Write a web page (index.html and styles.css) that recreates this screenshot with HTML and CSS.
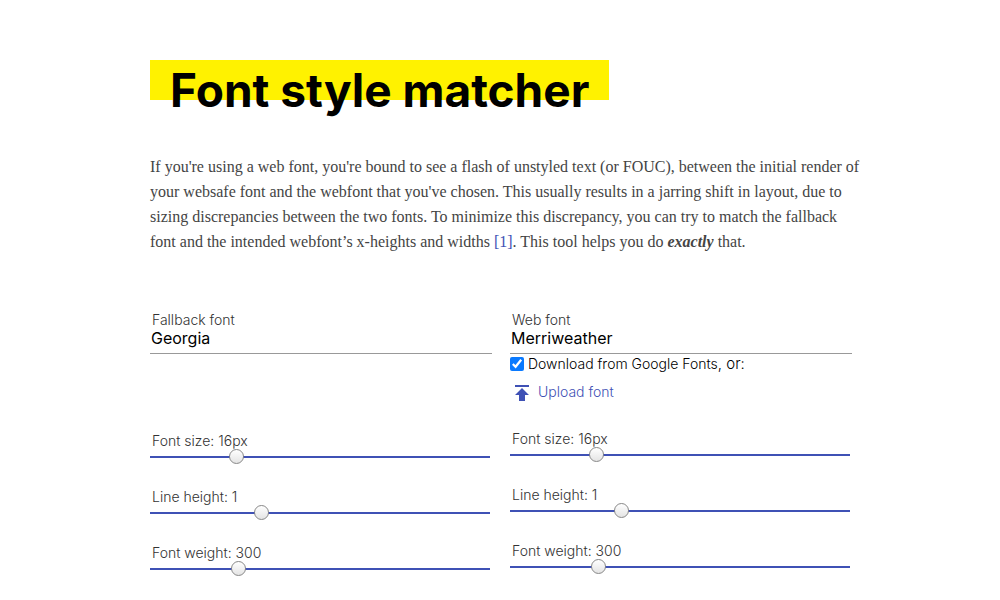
FILE: index.html
```html
<!DOCTYPE html>
<html lang="en">
<head>
<meta charset="utf-8">
<meta name="viewport" content="width=device-width, initial-scale=1">
<title>Font style matcher</title>
<link rel="stylesheet" href="styles.css">
</head>
<body>
<main class="page">
  <h1 class="title">Font style matcher</h1>
  <p class="intro">If you're using a web font, you're bound to see a flash of unstyled text (or FOUC), between the initial render of your websafe font and the webfont that you've chosen. This usually results in a jarring shift in layout, due to sizing discrepancies between the two fonts. To minimize this discrepancy, you can try to match the fallback font and the intended webfont’s x-heights and widths <a class="link" href="#note">[1]</a>. This tool helps you do <strong class="strong">exactly</strong> that.</p>
  <div class="columns">
    <section class="column">
      <div class="source">
        <label class="label" for="fallback-name">Fallback font</label>
        <input class="name" id="fallback-name" type="text" value="Georgia">
      </div>
      <div class="sliders sliders-fallback">
        <div class="slider"><label class="label" for="fallback-size">Font size: 16px</label><input class="range" id="fallback-size" type="range" min="0" max="1000" value="243"></div>
        <div class="slider"><label class="label" for="fallback-line">Line height: 1</label><input class="range" id="fallback-line" type="range" min="0" max="1000" value="319"></div>
        <div class="slider"><label class="label" for="fallback-weight">Font weight: 300</label><input class="range" id="fallback-weight" type="range" min="0" max="1000" value="250"></div>
      </div>
    </section>
    <section class="column">
      <div class="source">
        <label class="label" for="web-name">Web font</label>
        <input class="name" id="web-name" type="text" value="Merriweather">
        <div class="download"><input class="check" id="download" type="checkbox" checked><label class="check-label" for="download">Download from Google Fonts</label><span class="or">, or:</span></div>
        <button class="upload" type="button"><svg class="upload-icon" width="14" height="16" viewBox="0 0 14 16" aria-hidden="true"><path d="M0 0h14v2H0zM7 3l7 7h-4v6H4v-6H0z"/></svg>Upload font</button>
      </div>
      <div class="sliders">
        <div class="slider"><label class="label" for="web-size">Font size: 16px</label><input class="range" id="web-size" type="range" min="0" max="1000" value="243"></div>
        <div class="slider"><label class="label" for="web-line">Line height: 1</label><input class="range" id="web-line" type="range" min="0" max="1000" value="319"></div>
        <div class="slider"><label class="label" for="web-weight">Font weight: 300</label><input class="range" id="web-weight" type="range" min="0" max="1000" value="250"></div>
      </div>
    </section>
  </div>
</main>
</body>
</html>
```
FILE: styles.css
```css
* { box-sizing: border-box; }
body {
  margin: 0;
  background: #fff;
  color: #000;
  font-family: Inter, "Liberation Sans", sans-serif;
}
.page { max-width: 740px; margin: 0 auto; padding: 60px 20px 20px; }
.title {
  width: fit-content;
  margin: 0 0 34px;
  padding: 0 20px;
  background: linear-gradient(#fff200 0 40px, transparent 40px);
  font-size: 46px;
  line-height: 60px;
  font-weight: 700;
}
.intro {
  margin: 0 -14px 57px 0;
  color: #444;
  font: 16px/25px Georgia, "Liberation Serif", serif;
}
.link { color: #3f51b5; text-decoration: none; }
.strong { font-style: italic; }
.columns { display: grid; grid-template-columns: 1fr 1fr; gap: 20px; }
.column { min-width: 0; }
.source { min-height: 92px; }
.label { display: block; padding-left: 2px; color: #333; font-size: 14px; line-height: 18px; font-weight: 300; }
.name {
  display: block;
  width: calc(100% + 2px);
  height: 25px;
  padding: 0 1px 7px;
  border: 0;
  border-bottom: 1px solid #999;
  background: none;
  color: #000;
  font: inherit;
  font-size: 16px;
}
.download { display: flex; align-items: center; height: 19px; font-size: 15px; }
.check { width: 14px; height: 14px; margin: 0 4px 0 0; accent-color: #0a7aff; }
.check-label { font-size: 14px; font-weight: 300; }
.or { font-weight: 300; }
.upload {
  display: flex;
  align-items: center;
  gap: 9px;
  margin-top: 8px;
  padding: 0 5px;
  height: 20px;
  border: 0;
  background: none;
  color: #3f51b5;
  font: inherit;
  font-size: 14px;
  font-weight: 300;
}
.upload-icon { fill: #3f51b5; margin-top: 3px; }
.sliders { display: grid; gap: 20px; margin-top: 27px; }
.sliders-fallback { margin-top: 29px; }
.slider { height: 36px; }
.slider .label { line-height: 17px; }
.range {
  display: block;
  width: 100%;
  height: 15px;
  margin: 0;
  appearance: none;
  background: linear-gradient(#3f51b5, #3f51b5) center / 100% 2px no-repeat;
}
.range::-webkit-slider-thumb {
  appearance: none;
  width: 15px;
  height: 15px;
  border: 1px solid #888;
  border-radius: 50%;
  background: linear-gradient(#fff, #e4e4e4);
}
```
